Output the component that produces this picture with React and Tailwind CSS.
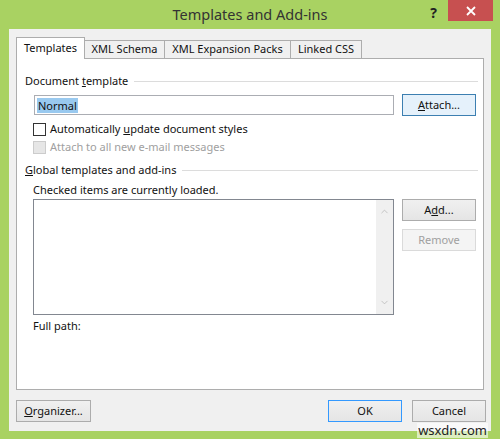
import { ChevronUp, ChevronDown } from "lucide-react";

// Word's "Templates and Add-ins" dialog, Windows 8 chrome

const font = { fontFamily: '"Noto Sans", "Open Sans", Arial, sans-serif' };

function Btn({ children, kind = "normal", className = "" }) {
  const styles = {
    normal: "bg-gradient-to-b from-[#f0f0f0] to-[#e5e5e5] border-[#acacac] text-[#111]",
    focus: "bg-[#e5f1fb] border-[#3c7fb1] text-[#111]",
    primary: "bg-gradient-to-b from-[#f0f0f0] to-[#e5e5e5] border-[#3399ff] text-[#111]",
    disabled: "bg-[#f4f4f4] border-[#dadada] text-[#a0a0a0]",
  };
  return (
    <div className={`h-[22px] w-[74px] border flex items-center justify-center text-[11px] ${styles[kind]} ${className}`}>
      {children}
    </div>
  );
}

function Heading({ children }) {
  return (
    <div className="flex items-center h-[16px] pr-[5px]">
      <span className="text-[11px] text-[#111] whitespace-nowrap">{children}</span>
      <div className="flex-1 h-px bg-[#dcdcdc] ml-[6px]" />
    </div>
  );
}

export default function App() {
  const tabs = [
    { label: "Templates", w: "w-[69px]", active: true },
    { label: "XML Schema", w: "w-[80px]" },
    { label: "XML Expansion Packs", w: "w-[126px]" },
    { label: "Linked CSS", w: "w-[71px]" },
  ];

  return (
    <div className="relative w-[500px] h-[439px] bg-[#a9d262] flex flex-col" style={font}>
      {/* title bar */}
      <div className="relative h-[30px] flex items-center justify-center">
        <span className="text-[14.5px] text-[#333] mt-[1px]">Templates and Add-ins</span>
        <div className="absolute right-[7px] top-0 flex items-start">
          <span className="text-[14px] font-bold text-[#222] mr-[11px] mt-[2px]">?</span>
          <div className="w-[45px] h-[21px] bg-[#c75050] flex items-center justify-center">
            <svg width="10" height="10" viewBox="0 0 10 10">
              <path d="M1 1 L9 9 M9 1 L1 9" stroke="white" strokeWidth="1.8" />
            </svg>
          </div>
        </div>
      </div>

      {/* client area */}
      <div className="flex-1 mx-[9px] mb-[8px] bg-[#f0f0f0] flex flex-col px-[7px] pt-[8px] pb-[9px]">
        {/* tab strip */}
        <div className="flex items-end h-[21px] relative z-10">
          {tabs.map((t) =>
            t.active ? (
              <div
                key={t.label}
                className={`${t.w} h-[22px] bg-white border border-b-0 border-[#adadad] flex items-center justify-center text-[11px] text-[#111] -mb-px`}
              >
                {t.label}
              </div>
            ) : (
              <div
                key={t.label}
                className={`${t.w} h-[18px] bg-[#f0f0f0] border border-l-0 border-b-0 border-[#adadad] flex items-center justify-center text-[11px] text-[#111]`}
              >
                {t.label}
              </div>
            )
          )}
        </div>

        {/* tab page */}
        <div className="h-[332px] bg-white border border-[#adadad] pl-[8px] pt-[14px] flex flex-col">
          <Heading>
            Document <u>t</u>emplate
          </Heading>

          <div className="flex items-center mt-[5px] pl-[9px]">
            <div className="w-[360px] h-[20px] border border-[#abadb3] flex items-center px-[2px]">
              <span className="bg-[#99c9ef] text-[11px] text-[#111] px-px leading-[15px]">Normal</span>
            </div>
            <Btn kind="focus" className="ml-[8px]">
              <span><u>A</u>ttach...</span>
            </Btn>
          </div>

          <div className="flex items-center h-[18px] mt-[4px] pl-[8px]">
            <div className="w-[13px] h-[13px] border border-[#333] bg-white" />
            <span className="ml-[4px] text-[11px] text-[#111]">
              Automatically <u>u</u>pdate document styles
            </span>
          </div>
          <div className="flex items-center h-[18px] pl-[8px]">
            <div className="w-[13px] h-[13px] border border-[#cccccc] bg-[#e6e6e6]" />
            <span className="ml-[4px] text-[11px] text-[#a0a0a0]">Attach to all new e-mail messages</span>
          </div>

          <div className="mt-[6px]">
            <Heading>
              <u>G</u>lobal templates and add-ins
            </Heading>
          </div>

          <div className="mt-[4px] pl-[8px] h-[16px] flex items-center text-[11px] text-[#111]">
            Checked items are currently loaded.
          </div>

          <div className="flex items-start pl-[8px] mt-[1px]">
            <div className="w-[361px] h-[116px] border border-[#828790] bg-white flex justify-end">
              <div className="w-[17px] h-full bg-[#f0f0f0] flex flex-col items-center justify-between py-[6px]">
                <ChevronUp size={11} strokeWidth={1.5} color="#b0b0b0" />
                <ChevronDown size={11} strokeWidth={1.5} color="#b0b0b0" />
              </div>
            </div>
            <div className="flex flex-col ml-[8px]">
              <Btn>
                <span>A<u>d</u>d...</span>
              </Btn>
              <Btn kind="disabled" className="mt-[8px]">
                Remove
              </Btn>
            </div>
          </div>

          <div className="mt-[3px] pl-[8px] h-[16px] flex items-center text-[11px] text-[#111]">Full path:</div>
        </div>

        {/* dialog buttons */}
        <div className="flex items-center mt-[10px]">
          <Btn className="w-[75px]">
            <span><u>O</u>rganizer...</span>
          </Btn>
          <div className="flex-1" />
          <Btn kind="primary">OK</Btn>
          <Btn className="ml-[10px] mr-[-2px]">Cancel</Btn>
        </div>
      </div>

      <span className="absolute right-[12px] bottom-[1px] text-[13px] text-[#222] bg-white/60 leading-[15px] px-px">
        wsxdn.com
      </span>
    </div>
  );
}
